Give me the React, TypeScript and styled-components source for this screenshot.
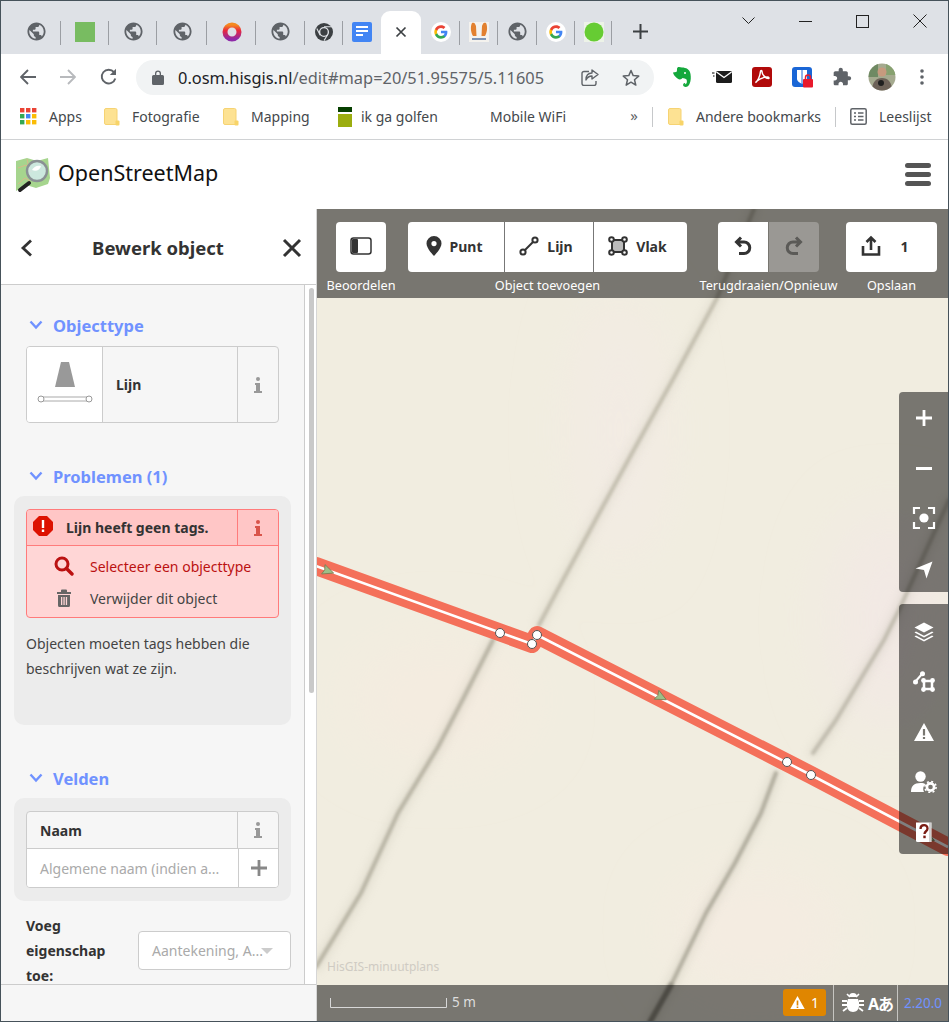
import React from 'react';
import styled, { createGlobalStyle } from 'styled-components';

const Global = createGlobalStyle`
  html, body { margin: 0; padding: 0; background: #fff; overflow: hidden; }
  * { box-sizing: border-box; }
`;
const UI = `"Noto Sans", "Open Sans", "Liberation Sans", sans-serif`;

const Frame = styled.div`
  width: 949px; height: 1022px; border: 1px solid #46525a; display: flex; flex-direction: column;
  font-family: ${UI}; overflow: hidden; background: #fff; color: #333;
`;

/* ---------- browser chrome ---------- */
const TabStrip = styled.div`
  height: 53px; flex: none; background: #dee1e6; display: flex; align-items: flex-end; padding-left: 11px; position: relative;
`;
const Tab = styled.div<{ $w: number; $div?: boolean }>`
  width: ${p => p.$w}px; height: 43px; display: flex; align-items: center; justify-content: center; padding-bottom: 2px;
  position: relative; flex: none;
  ${p => p.$div ? `&::after { content: ''; position: absolute; right: 0; top: 10px; height: 24px; width: 1px; background: #9b9ea3; }` : ''}
`;
const ActiveTab = styled(Tab)`
  background: #fff; border-radius: 9px 9px 0 0; color: #3c4043;
`;
const NewTab = styled.div`
  margin-left: 16px; height: 43px; width: 24px; display: flex; align-items: center; justify-content: center; padding-bottom: 2px;
`;
const WindowControls = styled.div`
  position: absolute; top: 10px; right: 0; display: flex; align-items: center;
`;
const WinBtn = styled.div<{ $w: number }>`
  width: ${p => p.$w}px; height: 20px; display: flex; align-items: center; justify-content: center;
`;
const Toolbar = styled.div`
  height: 46px; flex: none; background: #fff; display: flex; align-items: center; padding-left: 7px;
`;
const NavBtn = styled.div<{ $w: number }>`
  width: ${p => p.$w}px; height: 40px; display: flex; align-items: center; justify-content: center; flex: none;
`;
const Omnibox = styled.div`
  width: 518px; height: 35px; margin-left: 7px; border-radius: 18px; background: #f1f3f4; display: flex; align-items: center;
  padding-left: 16px; flex: none; margin-top: 1px;
`;
const Url = styled.div`
  font-size: 16.4px; color: #5f6368; margin-left: 14px; width: 403px; white-space: nowrap;
  b { font-weight: 400; color: #202124; }
`;
const OmniIcon = styled.div<{ $ml?: number }>`
  margin-left: ${p => p.$ml ?? 0}px; display: flex;
`;
const Extensions = styled.div`
  display: flex; margin-left: 8px;
`;
const ExtBtn = styled.div`
  width: 40px; height: 40px; display: flex; align-items: center; justify-content: center;
`;
const Bookmarks = styled.div`
  height: 40px; flex: none; background: #fff; border-bottom: 1px solid #d0d2d4; display: flex; align-items: center; padding-bottom: 6px;
  font-size: 14px; color: #44484c; position: relative; padding-left: 19px;
`;
const Mark = styled.div<{ $w: number; $gap?: number; $ml?: number }>`
  width: ${p => p.$w}px; flex: none; display: flex; align-items: center; white-space: nowrap; gap: ${p => p.$gap ?? 12}px;
  margin-left: ${p => p.$ml ?? 0}px;
`;
const Chevrons = styled.div`
  width: 18px; flex: none; font-size: 15px; color: #5f6368; text-align: center; line-height: 16px; margin-top: -3px;
`;
const BarDiv = styled.div<{ $ml: number }>`
  width: 1px; height: 20px; background: #c6c8ca; margin-left: ${p => p.$ml}px; flex: none;
`;

/* ---------- site header ---------- */
const SiteHeader = styled.div`
  height: 69px; flex: none; background: #fff; display: flex; align-items: center; padding: 0 17px 0 13px;
`;
const LogoText = styled.div`
  font-size: 21.5px; color: #111; margin-left: 7px; flex: 1; line-height: 1; margin-bottom: 4px;
`;
const Burger = styled.div`
  width: 26px; display: flex; flex-direction: column; gap: 4px; margin-top: -1px;
  span { display: block; height: 5px; border-radius: 2.5px; background: #555; }
`;

/* ---------- workspace ---------- */
const Workspace = styled.div`
  flex: 1; display: flex; min-height: 0;
`;
const Sidebar = styled.div`
  width: 316px; flex: none; display: flex; flex-direction: column; background: #fff; border-right: 1px solid #d6d6d6;
`;
const SideHeader = styled.div`
  height: 76px; flex: none; border-bottom: 1px solid #ccc; background: #fff; display: flex; align-items: center; justify-content: space-between; padding: 2px 14px 0 19px;
`;
const SideTitle = styled.div`
  font-size: 18.5px; font-weight: 700; color: #333; margin-left: 1px;
`;
const Scroller = styled.div`
  flex: 1; display: flex; min-height: 0; overflow: hidden;
`;
const Content = styled.div`
  width: 304px; flex: none; background: #f6f6f6; border-right: 1px solid #ccc; padding: 31px 13px 0; overflow: hidden;
`;
const Track = styled.div`
  flex: 1; padding: 3px 0 0 4px;
`;
const Thumb = styled.div`
  width: 5px; height: 405px; border-radius: 3px; background: #c9c9c9;
`;
const SideFooter = styled.div`
  height: 37px; flex: none; background: #f6f6f6; border-top: 1px solid #ccc;
`;
const SectionTitle = styled.div<{ $mt?: number; $mb?: number }>`
  height: 20px; margin-top: ${p => p.$mt ?? 0}px; display: flex; align-items: center; font-size: 16.5px; font-weight: 700; color: #7092ff;
  padding: 0 0 2px 15px; gap: 10px; margin-bottom: ${p => p.$mb ?? 10}px; white-space: nowrap;
`;
const TypeBox = styled.div`
  margin-left: 12px; width: 253px; height: 77px; border: 1px solid #ccc; border-radius: 4px; display: flex; overflow: hidden; background: #f6f6f6;
`;
const TypeIcon = styled.div`
  width: 76px; background: #fff; border-right: 1px solid #ccc; display: flex; align-items: center; justify-content: center; flex: none;
`;
const TypeName = styled.div`
  flex: 1; font-size: 14px; font-weight: 700; padding-left: 13px; display: flex; align-items: center;
`;
const InfoCell = styled.div<{ $border?: string }>`
  width: 41px; flex: none; align-self: stretch; border-left: 1px solid ${p => p.$border ?? '#ccc'}; display: flex; align-items: center; justify-content: center;
`;
const Panel = styled.div<{ $h: number }>`
  width: 277px; height: ${p => p.$h}px; background: #ececec; border-radius: 10px; padding: 13px 12px 0; 
`;
const ProblemCard = styled.div`
  width: 253px; height: 109px; border: 1px solid #ff7b7b; border-radius: 4px; background: #ffd6d6; overflow: hidden;
`;
const ProblemHead = styled.div`
  height: 36px; background: #ffc6c6; border-bottom: 1px solid #ff7b7b; display: flex; align-items: center; padding-left: 6px;
`;
const ProblemMark = styled.svg`
  display: block; flex: none; margin-top: -4px;
`;
const ProblemText = styled.div`
  flex: 1; font-size: 14px; font-weight: 700; color: #333; margin-left: 13px; white-space: nowrap;
`;
const ProblemAction = styled.div<{ $danger?: boolean }>`
  height: 32px; display: flex; align-items: center; padding-left: 27px; gap: 16px; font-size: 14px; color: ${p => p.$danger ? '#bb1111' : '#444'};
`;
const Actions = styled.div`
  padding-top: 4px;
`;
const Para = styled.p`
  margin: 13px 0 0; font-size: 14px; line-height: 25px; color: #444;
`;
const Field = styled.div`
  width: 253px; height: 77px; border: 1px solid #ccc; border-radius: 4px; overflow: hidden; background: #f6f6f6; display: flex; flex-direction: column;
`;
const FieldHead = styled.div`
  height: 37px; flex: none; display: flex; align-items: center; border-bottom: 1px solid #ccc;
`;
const FieldLabel = styled.div`
  flex: 1; font-size: 14px; font-weight: 700; padding-left: 13px;
`;
const FieldInput = styled.div`
  flex: 1; display: flex; background: #fff; 
`;
const Placeholder = styled.div`
  flex: 1; font-size: 14px; color: #aaa; padding-left: 13px; display: flex; align-items: center; white-space: nowrap;
`;
const PlusCell = styled.div`
  width: 40px; flex: none; border-left: 1px solid #ccc; display: flex; align-items: center; justify-content: center;
`;
const AddRow = styled.div`
  margin: 12px 0 0 12px; display: flex; align-items: center; height: 75px; width: 265px; justify-content: space-between;
`;
const AddLabel = styled.div`
  width: 100px; font-size: 14px; font-weight: 700; line-height: 25px; color: #333;
`;
const AddSelect = styled.div`
  width: 153px; height: 39px; background: #fff; border: 1px solid #ccc; border-radius: 4px; display: flex; align-items: center;
  padding-left: 13px; font-size: 14px; color: #aaa; position: relative; white-space: nowrap;
  &::after { content: ''; position: absolute; right: 17px; top: 16px; border: 6px solid transparent; border-top: 6px solid #ccc; border-bottom: 0; }
`;

/* ---------- map ---------- */
const MapPane = styled.div`
  flex: 1; position: relative; display: flex; flex-direction: column; background: #f1ede0; min-width: 0; overflow: hidden;
`;
const MapImage = styled.svg`
  position: absolute; left: 0; top: 0; width: 631px; height: 812px;
`;
const TopBar = styled.div`
  position: relative; height: 89px; flex: none; background: rgba(0,0,0,.5); display: flex; padding: 13px 0 0 19px;
`;
const Group = styled.div<{ $w: number; $ml?: number }>`
  width: ${p => p.$w}px; margin-left: ${p => p.$ml ?? 0}px; display: flex; flex-direction: column; align-items: center; flex: none;
`;
const Buttons = styled.div<{ $gap?: number }>`
  display: flex; height: 50px; gap: ${p => p.$gap ?? 1}px;
`;
const ToolBtn = styled.div<{ $w: number; $off?: boolean; $r?: string; $div?: boolean; $gap?: number; $pr?: number }>`
  width: ${p => p.$w}px; height: 50px; background: ${p => p.$off ? 'rgba(255,255,255,.25)' : '#fff'}; border-radius: ${p => p.$r ?? '4px'};
  display: flex; align-items: center; justify-content: center; gap: ${p => p.$gap ?? 8}px; font-size: 14px; font-weight: 700; color: #333; flex: none;
  padding: 0 ${p => p.$pr ?? 0}px 2px 0;
  ${p => p.$div ? 'border-left: 1px solid #777;' : ''}
`;
const ToolLabel = styled.div`
  font-size: 12.7px; color: #fff; white-space: nowrap; margin-top: 5px; line-height: 17px;
`;
const Middle = styled.div`
  position: relative; flex: 1; display: flex; flex-direction: column; align-items: flex-end; padding-top: 94px; gap: 12px;
`;
const Rail = styled.div<{ $h: number; $pt?: number }>`
  width: 49px; height: ${p => p.$h}px; background: rgba(0,0,0,.5); border-radius: 4px 0 0 4px; display: flex; flex-direction: column; padding-top: ${p => p.$pt ?? 1}px;
`;
const RailBtn = styled.div`
  height: 50px; flex: none; display: flex; align-items: center; justify-content: center;
`;
const Attribution = styled.div`
  position: absolute; left: 10px; bottom: 10px; font-size: 12px; color: #cfcbc3; 
`;
const BottomBar = styled.div`
  position: relative; height: 36px; flex: none; background: rgba(0,0,0,.5); display: flex; align-items: center; padding-left: 13px; color: #fff;
`;
const ScaleText = styled.div`
  font-size: 13.5px; color: #ddd; margin-left: 5px; flex: 1; padding-bottom: 2px;
`;
const WarnBadge = styled.div`
  width: 43px; height: 27px; background: #e08600; border-radius: 3px; display: flex; align-items: center; justify-content: center; gap: 6px; font-size: 14px; color: #fff; margin-top: -1px;
`;
const BarSep = styled.div<{ $ml: number }>`
  width: 1px; height: 36px; background: #c6c5c1; margin-left: ${p => p.$ml}px; flex: none;
`;
const Tools = styled.div`
  width: 63px; flex: none; display: flex; align-items: center; justify-content: center; gap: 4px; font-size: 16px; font-weight: 700; color: #fff; padding-left: 4px;
`;
const Lang = styled.span`
  font-family: "Noto Sans", "Noto Sans CJK JP", sans-serif; letter-spacing: -1px; white-space: nowrap;
`;
const Version = styled.div`
  font-size: 13.5px; color: #7092ff; width: 50px; text-align: center; flex: none;
`;
const Svg = styled.svg`
  display: block; flex: none;
`;
const UndoGlyph = styled.svg<{ $flip?: boolean }>`
  display: block; flex: none; ${p => p.$flip ? 'transform: scaleX(-1);' : ''}
`;

/* ---------- icons ---------- */
const Globe = () => (
  <Svg width="19" height="19" viewBox="1.5 1.5 21 21"><circle cx="12" cy="12" r="10" fill="#dee1e6" />
    <path fill="#5f6368" d="M12 2C6.48 2 2 6.48 2 12s4.48 10 10 10 10-4.48 10-10S17.52 2 12 2zm-1 17.93c-3.95-.49-7-3.85-7-7.93 0-.62.08-1.21.21-1.79L9 15v1c0 1.1.9 2 2 2v1.93zm6.9-2.54c-.26-.81-1-1.39-1.9-1.39h-1v-3c0-.55-.45-1-1-1H8v-2h2c.55 0 1-.45 1-1V7h2c1.1 0 2-.9 2-2v-.41c2.93 1.19 5 4.06 5 7.41 0 2.08-.8 3.97-2.1 5.39z" /></Svg>
);
const GoogleG = () => (
  <Svg width="20" height="20" viewBox="0 0 24 24"><circle cx="12" cy="12" r="12" fill="#fff" />
    <g transform="translate(3.2 3.2) scale(.73)">
      <path fill="#4285F4" d="M22.56 12.25c0-.78-.07-1.53-.2-2.25H12v4.26h5.92c-.26 1.37-1.04 2.53-2.21 3.31v2.77h3.57c2.08-1.92 3.28-4.74 3.28-8.09z" />
      <path fill="#34A853" d="M12 23c2.97 0 5.46-.98 7.28-2.66l-3.57-2.77c-.98.66-2.23 1.06-3.71 1.06-2.86 0-5.29-1.93-6.16-4.53H2.18v2.84C3.99 20.53 7.7 23 12 23z" />
      <path fill="#FBBC05" d="M5.84 14.09c-.22-.66-.35-1.36-.35-2.09s.13-1.43.35-2.09V7.07H2.18C1.43 8.55 1 10.22 1 12s.43 3.45 1.18 4.93l2.85-2.22.81-.62z" />
      <path fill="#EA4335" d="M12 5.38c1.62 0 3.06.56 4.21 1.64l3.15-3.15C17.45 2.09 14.97 1 12 1 7.7 1 3.99 3.47 2.18 7.07l3.66 2.84c.87-2.6 3.3-4.53 6.16-4.53z" />
    </g></Svg>
);
const Folder = () => (
  <Svg width="16" height="18" viewBox="0 0 16 18"><path d="M2 .5h9.500a1.500 1.500 0 0 1 1.500 1.500v14.500H2A1.500 1.500 0 0 1 .5 15V2A1.500 1.500 0 0 1 2 .5z" fill="#fde293" stroke="#f6d373" /><rect x="11.500" y="12.500" width="4" height="5" rx="1" fill="#f8d468" /></Svg>
);
const AppsGrid = () => (
  <Svg width="17" height="17" viewBox="0 0 17 17">
    {[['#ea4335', '#ea4335', '#ea4335'], ['#34a853', '#4285f4', '#fbbc05'], ['#34a853', '#fbbc05', '#fbbc05']].map((r, y) => r.map((c, x) => <rect key={`${x}${y}`} x={x * 6} y={y * 6} width="4.400" height="4.400" fill={c} />))}
  </Svg>
);
const Chevron = () => (
  <Svg width="14" height="10" viewBox="0 0 14 10"><path d="M1.500 1.500 7 7.500l5.500-6" fill="none" stroke="#7092ff" strokeWidth="2.400" /></Svg>
);
const InfoI = ({ c = '#999' }: { c?: string }) => (
  <Svg width="8" height="16" viewBox="0 0 8 16"><circle cx="4" cy="2" r="2" fill={c} /><path d="M1 6h5v8h2v2H0v-2h2V8H1z" fill={c} /></Svg>
);
const LineType = () => (
  <Svg width="56" height="48" viewBox="0 0 56 48">
    <path d="M24 1h8l6 25H18z" fill="#999" />
    <rect x="4" y="36" width="48" height="4" fill="#fff" stroke="#aaa" />
    <circle cx="4" cy="38" r="3" fill="#fff" stroke="#999" /><circle cx="52" cy="38" r="3" fill="#fff" stroke="#999" />
  </Svg>
);
const Pin = () => (
  <Svg width="16" height="20" viewBox="0 0 16 20"><path fillRule="evenodd" d="M8 0a7.500 7.500 0 0 1 7.500 7.500C15.500 12.500 8 20 8 20S.5 12.500.5 7.500A7.500 7.500 0 0 1 8 0zm0 5a2.600 2.600 0 1 0 0 5.200A2.600 2.600 0 0 0 8 5z" fill="#333" /></Svg>
);
const LineTool = () => (
  <Svg width="20" height="20" viewBox="0 0 20 20"><path d="M5 15 15 5" stroke="#333" strokeWidth="2" /><circle cx="4" cy="16" r="2.600" fill="#fff" stroke="#333" strokeWidth="2" /><circle cx="16" cy="4" r="2.600" fill="#fff" stroke="#333" strokeWidth="2" /></Svg>
);
const AreaTool = () => (
  <Svg width="20" height="20" viewBox="0 0 20 20"><rect x="4" y="4" width="12" height="12" fill="#bbb" stroke="#333" strokeWidth="2" />
    {[[3.500, 3.500], [16.500, 3.500], [3.500, 16.500], [16.500, 16.500]].map(([x, y]) => <circle key={`${x}${y}`} cx={x} cy={y} r="2.300" fill="#fff" stroke="#333" strokeWidth="2" />)}
  </Svg>
);
const Undo = ({ c = '#333', flip }: { c?: string; flip?: boolean }) => (
  <UndoGlyph width="18" height="20" viewBox="0 0 18 20" $flip={flip}>
    <path d="M7 1.500 2.500 6 7 10.500M3 6h7a4.800 4.800 0 0 1 0 11.500H5" fill="none" stroke={c} strokeWidth="3" />
  </UndoGlyph>
);
const Upload = () => (
  <Svg width="22" height="22" viewBox="0 0 22 22">
    <path d="M11 15V3M6.500 7 11 2.500 15.500 7" fill="none" stroke="#333" strokeWidth="2.600" />
    <path d="M3 11v8.500h16V11" fill="none" stroke="#333" strokeWidth="2.600" />
  </Svg>
);
const W = '#fff';
const PlusI = () => <Svg width="16" height="16" viewBox="0 0 16 16"><path d="M6.600 0h2.800v6.600H16v2.800H9.400V16H6.600V9.400H0V6.600h6.600z" fill={W} /></Svg>;
const MinusI = () => <Svg width="16" height="3" viewBox="0 0 16 3"><rect width="16" height="3" fill={W} /></Svg>;
const Focus = () => (
  <Svg width="24" height="24" viewBox="0 0 24 24"><path d="M2 8V2h6M16 2h6v6M22 16v6h-6M8 22H2v-6" fill="none" stroke={W} strokeWidth="2.200" /><circle cx="12" cy="12" r="4.600" fill={W} /></Svg>
);
const Locate = () => (
  <Svg width="18" height="22" viewBox="0 -4 18 22"><path d="M17.500.5 11.500 17.500 9 9 .5 7.500z" fill={W} /></Svg>
);
const Layers = () => (
  <Svg width="20" height="20" viewBox="0 0 20 20">
    <path d="M10 .5 19.500 5.500 10 10.500.5 5.500z" fill={W} />
    <path d="M2 9.500.5 10.500 10 15.500l9.500-5-1.500-1-8 4.200zM2 13.500l-1.500 1L10 19.500l9.500-5-1.500-1-8 4.200z" fill={W} />
  </Svg>
);
const DataI = () => (
  <Svg width="22" height="22" viewBox="0 0 22 22">
    <path d="M2 11 9 3" stroke={W} strokeWidth="2" />
    <circle cx="2.500" cy="11" r="2.500" fill={W} /><circle cx="9.500" cy="2.800" r="2.500" fill={W} />
    <rect x="11" y="10" width="8" height="8" fill="none" stroke={W} strokeWidth="2.500" />
    {[[10.500, 9.500], [19.500, 9.500], [10.500, 18.500], [19.500, 18.500]].map(([x, y]) => <circle key={`${x}${y}`} cx={x} cy={y} r="2.400" fill={W} />)}
  </Svg>
);
const WarnI = ({ s = 20 }: { s?: number }) => (
  <Svg width={s} height={s * .9} viewBox="0 0 20 18"><path fillRule="evenodd" d="M10 0 20 18H0zM8.900 6v6.500h2.200V6zM8.900 14v2h2.200v-2z" fill={W} /></Svg>
);
const UserGear = () => (
  <Svg width="26" height="22" viewBox="0 0 26 22">
    <circle cx="9.500" cy="5.500" r="5.200" fill={W} />
    <path d="M0 21c0-6 3-9 9.500-9 2.500 0 4 .5 5 1.200A6 6 0 0 0 13 21z" fill={W} />
    <circle cx="19.500" cy="16" r="3.600" fill="none" stroke={W} strokeWidth="2.600" />
    <circle cx="19.500" cy="16" r="5.600" fill="none" stroke={W} strokeWidth="1.600" strokeDasharray="2 2.400" />
  </Svg>
);
const HelpI = () => (
  <Svg width="18" height="22" viewBox="0 0 18 22">
    <path d="M1 1.500h15.500v19.500H2.500A1.500 1.500 0 0 1 1 19.500z" fill={W} />
    <path d="M15 1.500V21" stroke="#888" strokeWidth=".8" />
    <path d="M5.500 8c0-5 7-5 7 -.5 0 3-3 2.500-3 5.500" fill="none" stroke="#7a1c14" strokeWidth="2.300" />
    <rect x="8.300" y="14.600" width="2.400" height="2.600" fill="#7a1c14" />
  </Svg>
);
const BugI = () => (
  <Svg width="22" height="20" viewBox="0 0 22 20">
    <path d="M7 4a4 4 0 0 1 8 0z" fill={W} /><path d="M5 1 8 4M17 1l-3 3" stroke={W} strokeWidth="1.600" />
    <path d="M6 6h10l1 3v4c0 3-2.500 6-6 6s-6-3-6-6V9z" fill={W} />
    <path d="M0 8h5M22 8h-5M0 12h5M22 12h-5M1 18l4-3M21 18l-4-3" stroke={W} strokeWidth="1.800" />
  </Svg>
);
const Logo = () => (
  <Svg width="37" height="38" viewBox="0 0 37 38">
    <path d="M2 5 13 2l10 3 11-3 2 20-2 6-12 4-10-3-10 6z" fill="#a6d58e" />
    <path d="M4 12 12 9l6 7M13 3l3 14M4 28l7-6 5 3" fill="none" stroke="#d9b98a" strokeWidth="1" />
    <path d="M15 27 6 34" stroke="#222" strokeWidth="4" strokeLinecap="round" />
    <circle cx="23" cy="15" r="10" fill="#d6ecf2" fillOpacity=".8" stroke="#8a9194" strokeWidth="2.400" />
    <path d="M18 14c2-4 6-5 9-4-1 4-5 6-9 4z" fill="#fff" />
  </Svg>
);

const tabs: { w: number; k: string }[] = [
  { w: 49, k: 'globe' }, { w: 48, k: 'green' }, { w: 48, k: 'globe' }, { w: 50, k: 'globe' }, { w: 49, k: 'ring' }, { w: 49, k: 'globe' }, { w: 38, k: 'chrome' }, { w: 38, k: 'docs' },
];
const tabs2: { w: number; k: string; div?: boolean }[] = [
  { w: 39, k: 'g', div: true }, { w: 38, k: 'orange', div: true }, { w: 39, k: 'globe', div: true }, { w: 38, k: 'g', div: true }, { w: 37, k: 'dot', div: true },
];
const Favicon = ({ k }: { k: string }) => {
  if (k === 'globe') return <Globe />;
  if (k === 'g') return <GoogleG />;
  if (k === 'green') return <Svg width="20" height="20"><rect width="20" height="20" fill="#78bc61" /></Svg>;
  if (k === 'ring') return (
    <Svg width="20" height="20" viewBox="0 0 20 20"><defs><linearGradient id="rg" x1="0" y1="0" x2="0" y2="1"><stop offset="0" stopColor="#f58a1f" /><stop offset=".4" stopColor="#e8283e" /><stop offset="1" stopColor="#8e2aa8" /></linearGradient></defs>
      <circle cx="10" cy="10" r="7" fill="none" stroke="url(#rg)" strokeWidth="5" /></Svg>
  );
  if (k === 'chrome') return (
    <Svg width="18" height="18" viewBox="0 0 18 18"><circle cx="9" cy="9" r="9" fill="#3c4043" /><circle cx="9" cy="9" r="4.400" fill="#3c4043" stroke="#dee1e6" strokeWidth="1.400" /><path d="M9 3.800h7.500M5.200 12.300 1.800 5.500M12.800 11.500 9 17.600" stroke="#dee1e6" strokeWidth="1.100" /></Svg>
  );
  if (k === 'docs') return (
    <Svg width="20" height="20" viewBox="0 0 20 20"><rect width="20" height="20" rx="2" fill="#4285f4" /><path d="M4 5h12M4 9h12M4 13h7" stroke="#fff" strokeWidth="2" /></Svg>
  );
  if (k === 'orange') return (
    <Svg width="20" height="20" viewBox="0 0 20 20"><rect width="20" height="20" fill="#f4f2ee" /><path d="M3 1c2-1 3 0 4 3l.5 10H4C2 11 1 5 3 1zM17 1c-2-1-3 0-4 3l-.5 10H16c2-3 3-9 1-13z" fill="#e2802f" /><rect x="3" y="16" width="14" height="2" fill="#7d94b5" /></Svg>
  );
  return <Svg width="20" height="20" viewBox="0 0 20 20"><rect width="20" height="20" fill="#edf3e8" /><circle cx="10" cy="10" r="9.500" fill="#66cc33" /></Svg>;
};

const tracks = [
  { d: 'M755 209 718 298 673 381 632 455 603 508 558 591 540 625', c: '#c0bbab', o: .9 },
  { d: 'M494 640 465 697 439 747 399 813 362 893 317 967', c: '#b3af9f', o: .9 },
  { d: 'M950 500 900 610 885 640 837 720 814 753', c: '#b8b3a5', o: .8 },
  { d: 'M777 773 762 813 736 863 707 913 673 983 651 1022', c: '#aca899', o: .9 },
];

const MapBackdrop = () => (
  <MapImage viewBox="318 209 631 812">
    <defs>
      <filter id="b1" x="-30%" y="-30%" width="160%" height="160%"><feGaussianBlur stdDeviation="1.800" /></filter>
      <filter id="b2" x="-30%" y="-30%" width="160%" height="160%"><feGaussianBlur stdDeviation="5" /></filter>
      <filter id="b3" x="-30%" y="-30%" width="160%" height="160%"><feGaussianBlur stdDeviation="30" /></filter>
    </defs>
    <rect x="318" y="209" width="631" height="812" fill="#f1ede0" />
    <g filter="url(#b3)">
      <ellipse cx="890" cy="620" rx="60" ry="110" fill="#f2e9e4" />
      <ellipse cx="620" cy="430" rx="40" ry="130" fill="#f3ebe4" />
      <ellipse cx="440" cy="700" rx="90" ry="60" fill="#f4ece0" />
      <ellipse cx="760" cy="930" rx="90" ry="60" fill="#f4ece1" />
    </g>
    <g fill="none" strokeLinecap="round" strokeLinejoin="round">
      {tracks.map(t => <path key={t.d} d={t.d} stroke={t.c} strokeWidth="10" opacity=".25" filter="url(#b2)" />)}
      {tracks.map(t => <path key={t.d} d={t.d} stroke={t.c} strokeWidth="4" opacity={t.o} filter="url(#b1)" />)}
      <path d="M672 985 651 1022" stroke="#8a867a" strokeWidth="5" opacity=".7" filter="url(#b1)" />
      <path d="M317 566 533 644 538 635 812 775 949 847" stroke="#f4705a" strokeWidth="18" />
      <path d="M317 566 533 644 538 635 812 775 949 847" stroke="#fff" strokeWidth="2.600" strokeLinecap="butt" />
    </g>
    {[[329, 571, 20], [662, 697, 27], [930, 838, 27]].map(([x, y, a]) => (
      <path key={x} d="M6 0-5-5-3.500 0-5 5z" transform={`translate(${x} ${y}) rotate(${a})`} fill="#9cbf88" stroke="#7f7a52" strokeWidth=".8" />
    ))}
    {[[501, 633], [533, 644], [538, 635], [788, 762], [812, 775]].map(([x, y]) => (
      <circle key={x} cx={x} cy={y} r="4.500" fill="#fff" stroke="#555" strokeWidth="1" />
    ))}
  </MapImage>
);

export default function App() {
  return (
    <>
      <Global />
      <Frame>
        <TabStrip>
          {tabs.map((t, i) => <Tab key={i} $w={t.w} $div={i !== 7}><Favicon k={t.k} /></Tab>)}
          <ActiveTab $w={40}>
            <Svg width="12" height="12" viewBox="0 0 12 12"><path d="M1.500 1.500l9 9M10.500 1.500l-9 9" stroke="#3c4043" strokeWidth="1.700" /></Svg>
          </ActiveTab>
          {tabs2.map((t, i) => <Tab key={i} $w={t.w} $div={t.div}><Favicon k={t.k} /></Tab>)}
          <NewTab>
            <Svg width="15" height="15" viewBox="0 0 15 15"><path d="M7.500 0v15M0 7.500h15" stroke="#3c4043" strokeWidth="2" /></Svg>
          </NewTab>
          <WindowControls>
            <WinBtn $w={58}><Svg width="13" height="8" viewBox="0 0 13 8"><path d="M.5.5l6 6 6-6" fill="none" stroke="#222" /></Svg></WinBtn>
            <WinBtn $w={56}><Svg width="13" height="1" viewBox="0 0 13 1"><rect width="13" height="1" fill="#222" /></Svg></WinBtn>
            <WinBtn $w={58}><Svg width="13" height="13" viewBox="0 0 13 13"><rect x=".5" y=".5" width="12" height="12" fill="none" stroke="#222" /></Svg></WinBtn>
            <WinBtn $w={57}><Svg width="14" height="14" viewBox="0 0 14 14"><path d="M.5.5l13 13M13.500.5l-13 13" stroke="#222" /></Svg></WinBtn>
          </WindowControls>
        </TabStrip>
        <Toolbar>
          <NavBtn $w={40}><Svg width="16" height="16" viewBox="0 0 16 16"><path d="M16 8H1.500M8 1 1 8l7 7" fill="none" stroke="#5f6368" strokeWidth="1.900" /></Svg></NavBtn>
          <NavBtn $w={40}><Svg width="16" height="16" viewBox="0 0 16 16"><path d="M0 8h14.500M8 1l7 7-7 7" fill="none" stroke="#b8babd" strokeWidth="1.900" /></Svg></NavBtn>
          <NavBtn $w={41}><Svg width="18" height="18" viewBox="0 0 18 18"><path d="M15.300 10.500A6.900 6.900 0 1 1 14 4.200" fill="none" stroke="#5f6368" strokeWidth="1.900" /><path d="M16 .8v6.200H9.800z" fill="#5f6368" /></Svg></NavBtn>
          <Omnibox>
            <Svg width="12" height="15" viewBox="0 0 12 15"><path fillRule="evenodd" d="M3 5V3.500a3 3 0 0 1 6 0V5h1.500A1.500 1.500 0 0 1 12 6.500v7a1.500 1.500 0 0 1-1.500 1.500h-9A1.500 1.500 0 0 1 0 13.500v-7A1.500 1.500 0 0 1 1.500 5zm1.300 0h3.400V3.500a1.700 1.700 0 0 0-3.400 0z" fill="#5f6368" /></Svg>
            <Url><b>0.osm.hisgis.nl</b>/edit#map=20/51.95575/5.11605</Url>
            <OmniIcon>
              <Svg width="18" height="17" viewBox="0 0 18 17"><path d="M8 2.500H3A2 2 0 0 0 1 4.500v10a2 2 0 0 0 2 2h10a2 2 0 0 0 2-2V12" fill="none" stroke="#5f6368" strokeWidth="1.400" /><path d="M11 1v3c-4 0-6 2-6 7 1.500-3 3-4 6-4v3l6-4.500z" fill="none" stroke="#5f6368" strokeWidth="1.400" strokeLinejoin="round" /></Svg>
            </OmniIcon>
            <OmniIcon $ml={23}>
              <Svg width="18" height="17" viewBox="0 0 18 17"><path d="M9 1.500 11.200 6.600l5.500.5-4.200 3.600 1.300 5.400L9 13.200l-4.800 2.900 1.300-5.400L1.300 7.100l5.500-.5z" fill="none" stroke="#5f6368" strokeWidth="1.500" strokeLinejoin="round" /></Svg>
            </OmniIcon>
          </Omnibox>
          <Extensions>
            <ExtBtn>
              <Svg width="20" height="22" viewBox="0 0 20 22"><path d="M5 3c0-1.500 1-2 2-2l3 .5c4 0 8 2 8.500 6.500.5 3 .5 7-1 10-1 2.500-3.500 3.500-5.500 2.500-1.500-1-1-3.500 1-3.500.5 0 .5 1-.5 1 2 1 3-2 2-4.500-.5-1-3-1-4-1.500-1 1.500-3 2-5 .5C2 10 1 7 1 6.500l3-.5c1 0 1-1.500 1-3z" fill="#14a83c" /><circle cx="13" cy="7" r="1" fill="#fff" /></Svg>
            </ExtBtn>
            <ExtBtn>
              <Svg width="20" height="14" viewBox="0 0 20 14"><rect x="4" y="1" width="16" height="12" rx="1.500" fill="#1c1c1c" /><path d="M4.500 2 12 7.500 19.500 2" fill="none" stroke="#fff" strokeWidth="1.400" /><path d="M0 3h2.500M1 6h1.500" stroke="#555" strokeWidth="1.500" /></Svg>
            </ExtBtn>
            <ExtBtn>
              <Svg width="20" height="20" viewBox="0 0 20 20"><rect width="20" height="20" rx="3" fill="#b10a0a" /><path d="M3.500 15.500c2-1 4.500-6 5-11 0-1.500 1.500-1.500 1.500 0 0 3 3.500 7 6.500 7 1 0 .5-1.500-1-1.500-3 0-7.500 1.500-10.500 4z" fill="none" stroke="#fff" strokeWidth="1.500" /></Svg>
            </ExtBtn>
            <ExtBtn>
              <Svg width="21" height="21" viewBox="0 0 21 21"><rect width="20" height="20" rx="3" fill="#1a66d6" /><path d="M5 3h10v9c0 2-3 4-5 5-2-1-5-3-5-5z" fill="#fff" /><path d="M10 3v14" stroke="#1a66d6" strokeWidth="1" /><rect x="11" y="12" width="10" height="8.500" rx="1" fill="#e8192c" /><path d="M13.500 12V10.500a2.500 2.500 0 0 1 5 0V12" fill="none" stroke="#e8192c" strokeWidth="1.500" /></Svg>
            </ExtBtn>
            <ExtBtn>
              <Svg width="20" height="20" viewBox="0 0 24 24"><path fill="#5f6368" d="M20.500 11H19V7c0-1.100-.9-2-2-2h-4V3.500C13 2.120 11.880 1 10.500 1S8 2.120 8 3.500V5H4c-1.100 0-1.990.9-1.990 2v3.800H3.500c1.490 0 2.700 1.210 2.700 2.700s-1.210 2.700-2.700 2.700H2V20c0 1.100.9 2 2 2h3.800v-1.500c0-1.490 1.210-2.700 2.700-2.700 1.490 0 2.700 1.210 2.700 2.700V22H17c1.100 0 2-.9 2-2v-4h1.500c1.380 0 2.500-1.120 2.500-2.500S21.880 11 20.500 11z" /></Svg>
            </ExtBtn>
            <ExtBtn>
              <Svg width="28" height="28" viewBox="0 0 28 28"><defs><clipPath id="av"><circle cx="14" cy="14" r="13.500" /></clipPath></defs>
                <g clipPath="url(#av)"><rect width="28" height="28" fill="#a5aa8f" /><rect x="0" y="0" width="10" height="14" fill="#6f8a63" /><rect x="18" y="0" width="10" height="12" fill="#87a170" /><circle cx="14" cy="9" r="4.500" fill="#c79a7e" /><path d="M4 28c0-9 4-13 10-13s10 4 10 13z" fill="#6d6258" /><circle cx="13" cy="20" r="3" fill="#1f1f1f" /></g></Svg>
            </ExtBtn>
            <ExtBtn>
              <Svg width="4" height="16" viewBox="0 0 4 16"><circle cx="2" cy="2" r="1.800" fill="#5f6368" /><circle cx="2" cy="8" r="1.800" fill="#5f6368" /><circle cx="2" cy="14" r="1.800" fill="#5f6368" /></Svg>
            </ExtBtn>
          </Extensions>
        </Toolbar>
        <Bookmarks>
          <Mark $w={84}><AppsGrid />Apps</Mark>
          <Mark $w={119}><Folder />Fotografie</Mark>
          <Mark $w={115}><Folder />Mapping</Mark>
          <Mark $w={152} $gap={9}>
            <Svg width="14" height="20" viewBox="0 0 14 20"><rect width="14" height="5" fill="#063f00" /><rect y="7" width="14" height="13" fill="#9bad0f" /></Svg>
            ik ga golfen
          </Mark>
          <Mark $w={135}>Mobile WiFi</Mark>
          <Chevrons>»</Chevrons>
          <BarDiv $ml={9} />
          <Mark $w={167} $ml={15}><Folder />Andere bookmarks</Mark>
          <BarDiv $ml={0} />
          <Mark $w={95} $ml={14}>
            <Svg width="17" height="17" viewBox="0 0 17 17"><rect x=".8" y=".8" width="15.400" height="15.400" rx="1.500" fill="none" stroke="#5f6368" strokeWidth="1.500" /><path d="M4 5h2M8 5h5.500M4 8.500h2M8 8.500h5.500M4 12h2M8 12h5.500" stroke="#5f6368" strokeWidth="1.500" /></Svg>
            Leeslijst
          </Mark>
        </Bookmarks>
        <SiteHeader>
          <Logo />
          <LogoText>OpenStreetMap</LogoText>
          <Burger><span /><span /><span /></Burger>
        </SiteHeader>
        <Workspace>
          <Sidebar>
            <SideHeader>
              <Svg width="13" height="18" viewBox="0 0 13 18"><path d="M11 1.500 3 9l8 7.500" fill="none" stroke="#333" strokeWidth="2.800" /></Svg>
              <SideTitle>Bewerk object</SideTitle>
              <Svg width="20" height="20" viewBox="0 0 20 20"><path d="M2 2l16 16M18 2 2 18" stroke="#333" strokeWidth="3" /></Svg>
            </SideHeader>
            <Scroller>
              <Content>
                <SectionTitle><Chevron />Objecttype</SectionTitle>
                <TypeBox>
                  <TypeIcon><LineType /></TypeIcon>
                  <TypeName>Lijn</TypeName>
                  <InfoCell><InfoI /></InfoCell>
                </TypeBox>
                <SectionTitle $mt={44} $mb={9}><Chevron />Problemen (1)</SectionTitle>
                <Panel $h={229}>
                  <ProblemCard>
                    <ProblemHead>
                      <ProblemMark width="20" height="20" viewBox="0 0 20 20"><path d="M6 0h8l6 6v8l-6 6H6l-6-6V6z" fill="#dd1100" /><rect x="8.800" y="4" width="2.400" height="8" fill="#fff" /><rect x="8.800" y="13.500" width="2.400" height="2.500" fill="#fff" /></ProblemMark>
                      <ProblemText>Lijn heeft geen tags.</ProblemText>
                      <InfoCell $border="#ff7b7b"><InfoI c="#d9544a" /></InfoCell>
                    </ProblemHead>
                    <Actions>
                      <ProblemAction $danger>
                        <Svg width="20" height="20" viewBox="0 0 20 20"><circle cx="8" cy="8" r="6" fill="none" stroke="#bb1111" strokeWidth="3" /><path d="M12.500 12.500 18 18" stroke="#bb1111" strokeWidth="3.400" strokeLinecap="round" /></Svg>
                        Selecteer een objecttype
                      </ProblemAction>
                      <ProblemAction>
                        <Svg width="20" height="20" viewBox="0 0 20 20"><path d="M3 4h14v2H3zM7 4V2.500A1 1 0 0 1 8 1.500h4a1 1 0 0 1 1 1V4z" fill="#666" /><path fillRule="evenodd" d="M4 7h12v10.500a1.500 1.500 0 0 1-1.500 1.500h-9A1.500 1.500 0 0 1 4 17.500zM7 9v8h1.300V9zM9.400 9v8h1.300V9zM11.800 9v8h1.300V9z" fill="#666" /></Svg>
                        Verwijder dit object
                      </ProblemAction>
                    </Actions>
                  </ProblemCard>
                  <Para>Objecten moeten tags hebben die beschrijven wat ze zijn.</Para>
                </Panel>
                <SectionTitle $mt={44} $mb={9}><Chevron />Velden</SectionTitle>
                <Panel $h={103}>
                  <Field>
                    <FieldHead><FieldLabel>Naam</FieldLabel><InfoCell><InfoI /></InfoCell></FieldHead>
                    <FieldInput>
                      <Placeholder>Algemene naam (indien a...</Placeholder>
                      <PlusCell><Svg width="16" height="16" viewBox="0 0 16 16"><path d="M6.600 0h2.800v6.600H16v2.800H9.400V16H6.600V9.400H0V6.600h6.600z" fill="#888" /></Svg></PlusCell>
                    </FieldInput>
                  </Field>
                </Panel>
                <AddRow>
                  <AddLabel>Voeg eigenschap toe:</AddLabel>
                  <AddSelect>Aantekening, A...</AddSelect>
                </AddRow>
              </Content>
              <Track><Thumb /></Track>
            </Scroller>
            <SideFooter />
          </Sidebar>
          <MapPane>
            <MapBackdrop />
            <TopBar>
              <Group $w={50}>
                <Buttons>
                  <ToolBtn $w={50}>
                    <Svg width="22" height="18" viewBox="0 0 22 18"><rect x="1" y="1" width="20" height="16" rx="2.500" fill="none" stroke="#333" strokeWidth="1.500" /><rect x="2" y="2" width="6" height="14" rx="1" fill="#333" /></Svg>
                  </ToolBtn>
                </Buttons>
                <ToolLabel>Beoordelen</ToolLabel>
              </Group>
              <Group $w={279} $ml={22}>
                <Buttons $gap={0}>
                  <ToolBtn $w={96} $pr={4} $r="4px 0 0 4px"><Pin />Punt</ToolBtn>
                  <ToolBtn $w={89} $pr={6} $r="0" $div><LineTool />Lijn</ToolBtn>
                  <ToolBtn $w={94} $pr={6} $r="0 4px 4px 0" $div><AreaTool />Vlak</ToolBtn>
                </Buttons>
                <ToolLabel>Object toevoegen</ToolLabel>
              </Group>
              <Group $w={101} $ml={31}>
                <Buttons>
                  <ToolBtn $w={50} $r="4px 0 0 4px"><Undo /></ToolBtn>
                  <ToolBtn $w={50} $off $r="0 4px 4px 0"><Undo c="#5b5a57" flip /></ToolBtn>
                </Buttons>
                <ToolLabel>Terugdraaien/Opnieuw</ToolLabel>
              </Group>
              <Group $w={91} $ml={27}>
                <Buttons>
                  <ToolBtn $w={91} $gap={18} $pr={14}><Upload />1</ToolBtn>
                </Buttons>
                <ToolLabel>Opslaan</ToolLabel>
              </Group>
            </TopBar>
            <Middle>
              <Rail $h={200}>
                <RailBtn><PlusI /></RailBtn>
                <RailBtn><MinusI /></RailBtn>
                <RailBtn><Focus /></RailBtn>
                <RailBtn><Locate /></RailBtn>
              </Rail>
              <Rail $h={250} $pt={3}>
                <RailBtn><Layers /></RailBtn>
                <RailBtn><DataI /></RailBtn>
                <RailBtn><WarnI /></RailBtn>
                <RailBtn><UserGear /></RailBtn>
                <RailBtn><HelpI /></RailBtn>
              </Rail>
              <Attribution>HisGIS-minuutplans</Attribution>
            </Middle>
            <BottomBar>
              <Svg width="117" height="10" viewBox="0 0 117 10"><path d="M.5 0v9.500h116V0" fill="none" stroke="#d8d8d8" /></Svg>
              <ScaleText>5 m</ScaleText>
              <WarnBadge><WarnI s={15} />1</WarnBadge>
              <BarSep $ml={7} />
              <Tools><BugI /><Lang>Aあ</Lang></Tools>
              <BarSep $ml={0} />
              <Version>2.20.0</Version>
            </BottomBar>
          </MapPane>
        </Workspace>
      </Frame>
    </>
  );
}
